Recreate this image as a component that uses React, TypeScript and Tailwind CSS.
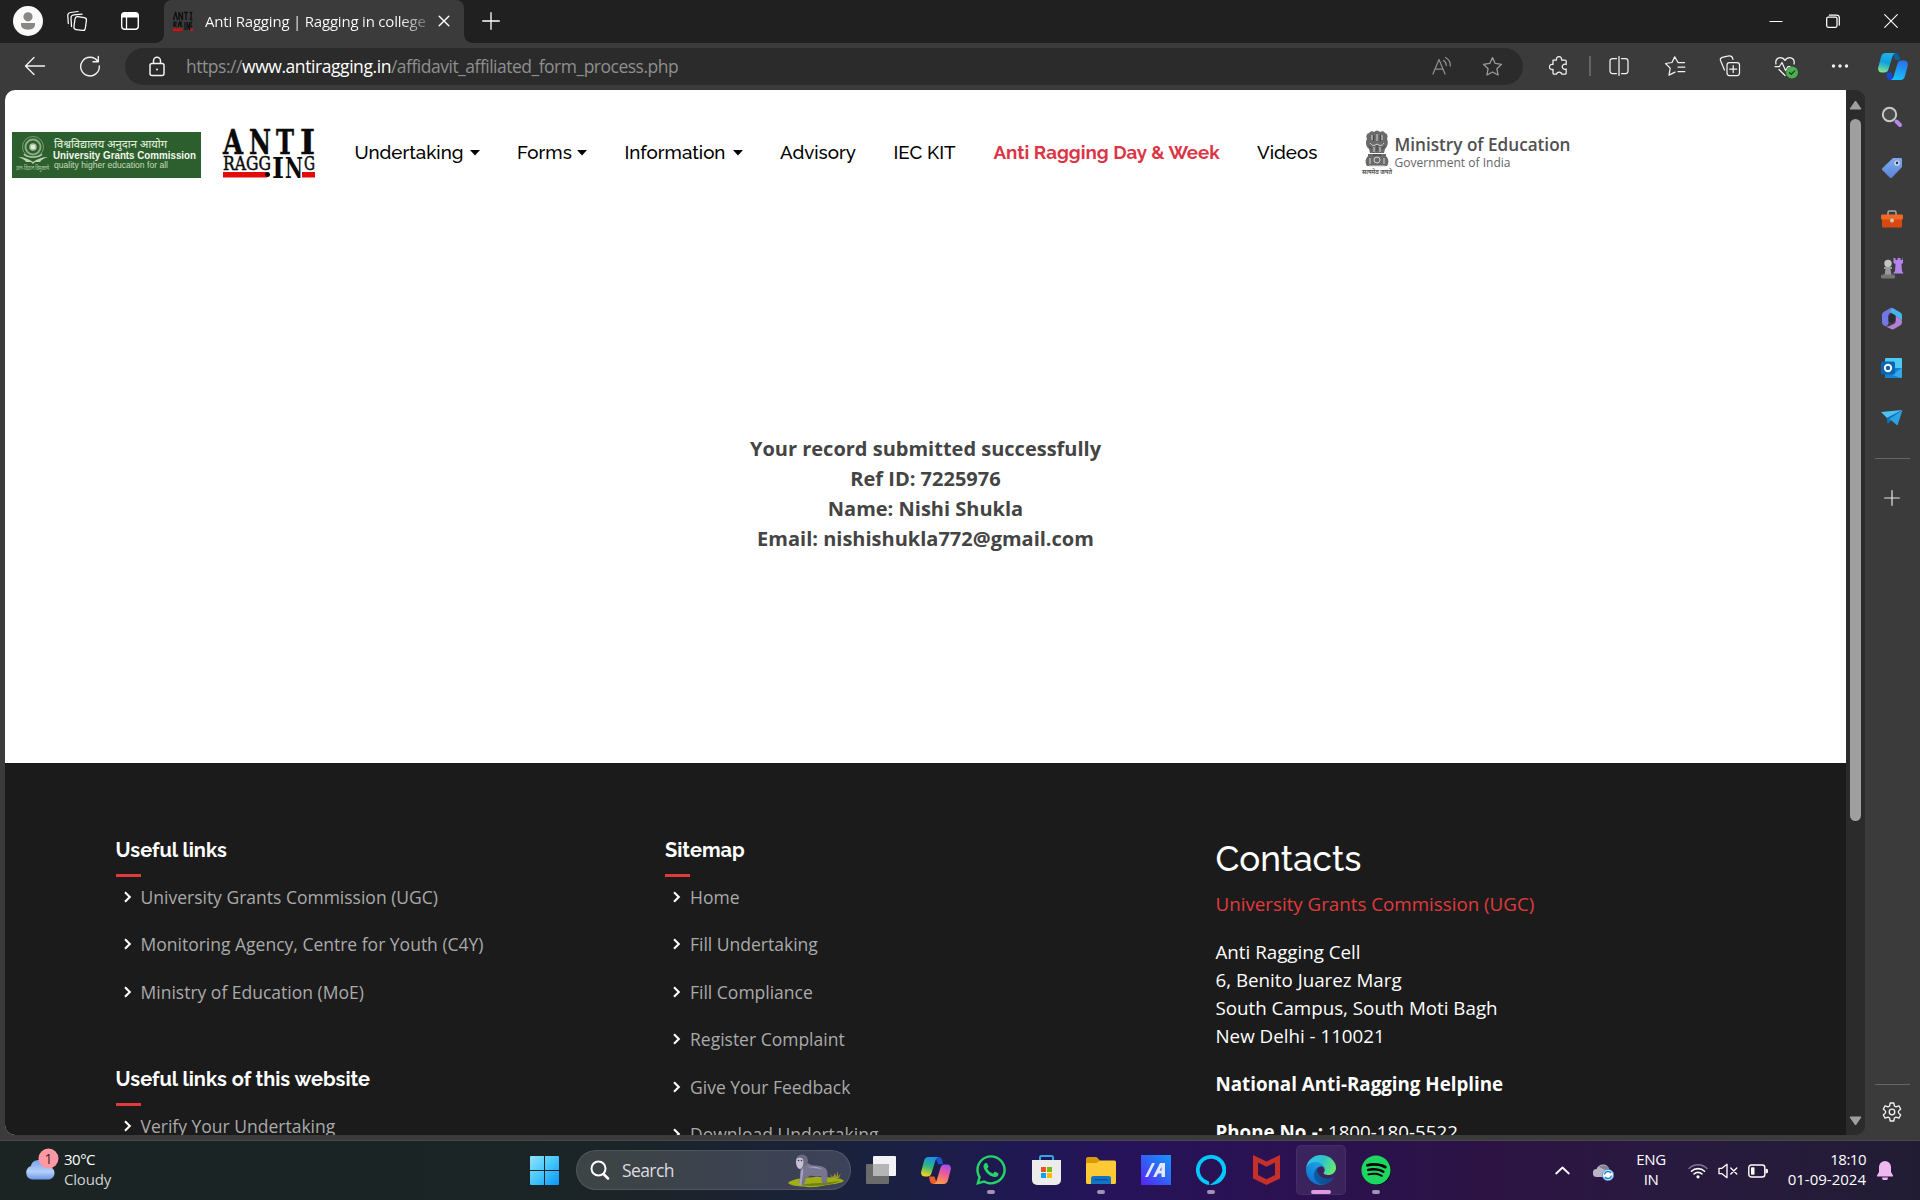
import type { ReactNode } from 'react';
import { FaSpotify, FaWhatsapp } from 'react-icons/fa6';

type BoxProps = { className: string; viewBox: string; children: ReactNode };

function Glyph({ className, viewBox, children }: BoxProps) {
  return (
    <svg
      className={'shrink-0 ' + className}
      viewBox={viewBox}
      fill="none"
      stroke="currentColor"
      strokeWidth="1.25"
      strokeLinecap="round"
      strokeLinejoin="round"
    >
      {children}
    </svg>
  );
}

/* ---------- Browser tab strip ---------- */

function Favicon() {
  return (
    <svg className="ml-[9px] size-[20px] shrink-0" viewBox="0 0 20 20">
      <path d="M.5 9 2.500 1 4.500 9M6 9V1l3.500 8V1M11 1.500h4M13 1v8M18 1v8M16.700 1.500h2.600M16.700 8.500h2.600" fill="none" stroke="#101010" strokeWidth="1.300" />
      <path d="M1 16v-5h2v2H1l2.500 3M5 16l1.500-5L8 16M9 11h-1v4h1.500M12 11v8M14 19v-8l2.500 8v-8M19.500 11h-1.500v5h1.500" fill="none" stroke="#101010" strokeWidth="1.100" />
      <path d="M0 17.500h9.500V20H0zM17.500 17.500H20V20h-2.500z" fill="#e30a0a" />
    </svg>
  );
}

function TabStrip() {
  return (
    <div className="flex h-[43px] shrink-0 items-center bg-[#202020] text-white">
      <svg className="mb-[1px] ml-[13px] size-[30px] shrink-0" viewBox="0 0 30 30">
        <circle cx="15" cy="15" r="15" fill="#fafafa" />
        <circle cx="15" cy="10.8" r="4.6" fill="#8a8683" />
        <path d="M8 17h14v1.500c0 3.400-3 5.200-7 5.200s-7-1.800-7-5.200z" fill="#8a8683" />
      </svg>
      <Glyph className="mb-[1px] ml-[23px] size-[22px]" viewBox="0 0 22 22">
        <rect x="8.500" y="7" width="11.500" height="13" rx="2.500" transform="rotate(8 14 13)" />
        <path d="M5.500 16.500 5 8.200C4.900 6.200 6 5 8 4.800l8-.6" />
        <path d="M2.300 13.500 1.800 6c-.2-2 .9-3.200 2.900-3.500L12 1.500" />
      </Glyph>
      <svg className="mb-[1px] ml-[32px] size-[20px] shrink-0" viewBox="0 0 20 20">
        <rect x="1.700" y="1.700" width="16.600" height="16.600" rx="3" fill="none" stroke="#fff" strokeWidth="1.400" />
        <path d="M1.500 6.500V4.500a3 3 0 0 1 3-3h11a3 3 0 0 1 3 3v2z" fill="#fff" />
        <path d="M6.500 6v12" stroke="#fff" strokeWidth="1.300" />
      </svg>
      <div className="ml-[16px] flex h-full items-end">
        <div className="size-[8px] bg-[radial-gradient(circle_at_0_0,#202020_7.500px,#3b3b3b_8px)]" />
      </div>
      <div className="flex h-full w-[300px] items-center rounded-t-[8px] bg-[#3b3b3b] pb-[1px]">
        <Favicon />
        <span className="ml-[12px] w-[222px] overflow-hidden bg-[linear-gradient(90deg,#fff_88%,#6a6a6a_100%)] bg-clip-text text-[15px] tracking-[-0.2px] whitespace-nowrap text-transparent">
          Anti Ragging | Ragging in college
        </span>
        <Glyph className="ml-[11px] size-[12px]" viewBox="0 0 12 12">
          <path d="m1.200 1.200 9.600 9.600M10.800 1.200 1.200 10.800" strokeWidth="1.400" />
        </Glyph>
      </div>
      <div className="flex h-full items-end">
        <div className="size-[8px] bg-[radial-gradient(circle_at_100%_0,#202020_7.500px,#3b3b3b_8px)]" />
      </div>
      <Glyph className="mb-[1px] ml-[10px] size-[18px]" viewBox="0 0 18 18">
        <path d="M9 .7v16.600M.7 9h16.600" strokeWidth="1.300" />
      </Glyph>
      <div className="mb-[1px] ml-auto flex items-center">
        <Glyph className="size-[14px]" viewBox="0 0 14 14">
          <path d="M.5 7.500h13" strokeLinecap="butt" strokeWidth="1" />
        </Glyph>
        <Glyph className="ml-[43px] size-[14px]" viewBox="0 0 14 14">
          <rect x=".7" y="3" width="10.300" height="10.300" rx="1.500" />
          <path d="M3.300 1h7.200a2.800 2.800 0 0 1 2.800 2.800V11" />
        </Glyph>
        <Glyph className="mr-[22px] ml-[44px] size-[14px]" viewBox="0 0 14 14">
          <path d="m.7.7 12.600 12.600M13.300.7.7 13.300" strokeWidth="1.100" />
        </Glyph>
      </div>
    </div>
  );
}

/* ---------- Address bar ---------- */

function CopilotLogo({ blue, className }: { blue?: boolean; className: string }) {
  const id = blue ? 'cb' : 'cc';
  const left = blue ? ['#1fb4e8', '#0fa0e0', '#7ee58f'] : ['#1a8cf0', '#2fb77c', '#f7d21c'];
  const right = blue ? ['#2c6fe8', '#1e9bf2', '#19c3f7'] : ['#a34bf0', '#f0608f', '#fb9a4a'];
  return (
    <svg className={'shrink-0 ' + className} viewBox="0 0 30 27">
      <defs>
        <linearGradient id={id + 'l'} x1=".6" y1="0" x2=".35" y2="1">
          <stop offset="0" stopColor={left[0]} />
          <stop offset=".5" stopColor={left[1]} />
          <stop offset="1" stopColor={left[2]} />
        </linearGradient>
        <linearGradient id={id + 'r'} x1=".7" y1="0" x2=".4" y2="1">
          <stop offset="0" stopColor={right[0]} />
          <stop offset=".5" stopColor={right[1]} />
          <stop offset="1" stopColor={right[2]} />
        </linearGradient>
      </defs>
      <path d="M14 0h3.500c2 0 3 1 3.600 3l1.200 4.200h-5z" fill={blue ? '#0a5f9c' : '#1b52c9'} />
      <path d="M8 19.500h5.500L16 27h-3.500c-2 0-3-1-3.600-3z" fill={blue ? '#1846d6' : '#ee5a2a'} />
      <path d="M7.500 0h10c-1.800.3-2.600 1.800-3.200 3.800l-3.800 12.400c-.7 2.400-2 3.300-4.200 3.300H4c-3.200 0-4.500-2.300-3.700-5.300L3 4C3.700 1.300 5 0 7.500 0z" fill={`url(#${id}l)`} />
      <path d="M22.500 27h-10c1.800-.3 2.600-1.800 3.200-3.800l3.800-12.400c.7-2.400 2-3.300 4.200-3.300H26c3.200 0 4.500 2.300 3.700 5.300L27 23c-.7 2.700-2 4-4.500 4z" fill={`url(#${id}r)`} />
    </svg>
  );
}

const STAR = 'm10 1.500 2.600 5.600 6 .8-4.400 4.200 1.100 6-5.300-2.900-5.300 2.900 1.100-6L1.400 7.900l6-.8z';

function Toolbar() {
  return (
    <div className="flex h-[46px] shrink-0 items-center bg-[#3b3b3b] text-[#f2f2f2]">
      <Glyph className="ml-[24px] size-[22px]" viewBox="0 0 22 22">
        <path d="M20.500 11H1.700M10 2.500 1.500 11l8.500 8.500" strokeWidth="1.400" />
      </Glyph>
      <Glyph className="ml-[33px] size-[22px]" viewBox="0 0 22 22">
        <path d="M18.800 6.500A9.300 9.300 0 1 0 20.300 11M19.300 1.500v5.300H14" strokeWidth="1.400" />
      </Glyph>
      <div className="ml-[24px] flex h-[37px] w-[1398px] items-center rounded-full bg-[#2b2b2b]">
        <svg className="ml-[24px] h-[21px] w-[16px] shrink-0" viewBox="0 0 16 21" fill="none" stroke="#f2f2f2" strokeWidth="1.500">
          <rect x="1" y="7.500" width="14" height="12" rx="2" />
          <path d="M4.500 7.500V4.700a3.500 3.500 0 0 1 7 0v2.800" />
          <circle cx="8" cy="13.500" r="1" fill="#f2f2f2" stroke="none" />
        </svg>
        <span className="ml-[21px] text-[17.5px] tracking-[-0.46px] whitespace-nowrap text-[#8f8f8f]">
          https://<span className="tracking-[-0.43px] text-white">www.antiragging.in</span>
          <span className="tracking-[-0.5px]">/affidavit_affiliated_form_process.php</span>
        </span>
        <Glyph className="ml-auto size-[20px] text-[#8f8f8f]" viewBox="0 0 20 20">
          <path d="m1 18 6-14.500L13 18M3 13h8M11.500 4.500a6 6 0 0 1 2.800 5M13.500 1.500a9 9 0 0 1 4.800 8.500" />
        </Glyph>
        <Glyph className="mr-[20px] ml-[30px] size-[21px] text-[#9a9a9a]" viewBox="0 0 20 20">
          <path d={STAR} />
        </Glyph>
      </div>
      <Glyph className="ml-[26px] size-[20px]" viewBox="0 0 20 20">
        <path d="M4 4h3.500a2.600 2.600 0 1 1 5 0H16a1.200 1.200 0 0 1 1.200 1.200v3.300a2.600 2.600 0 1 0 0 4.500v4A1.200 1.200 0 0 1 16 18.200h-3.200a2.700 2.700 0 0 0-5.300 0H5.200A1.200 1.200 0 0 1 4 17v-3.700a2.600 2.600 0 1 1 0-4.800z" />
      </Glyph>
      <div className="ml-[20px] h-[20px] w-[2px] bg-[#636363]" />
      <Glyph className="ml-[18px] h-[20px] w-[20px]" viewBox="0 0 20 20">
        <path d="M7.500 2.500h-4A2.500 2.500 0 0 0 1 5v10a2.500 2.500 0 0 0 2.500 2.500h4M12.500 2.500h4A2.500 2.500 0 0 1 19 5v10a2.500 2.500 0 0 1-2.500 2.500h-4M10 .6v18.800" />
      </Glyph>
      <Glyph className="ml-[35px] size-[22px]" viewBox="0 0 22 22">
        <path d="M20.500 7.500H14L10.700 1.800 8 7.500 1.500 8.500l4.700 4.600-1.200 7 6-3M14 12h6.800M14 16.500h6.800" />
      </Glyph>
      <Glyph className="ml-[33px] size-[22px]" viewBox="0 0 22 22">
        <rect x="8" y="7.500" width="12.500" height="13" rx="2.500" />
        <path d="M14.200 10.500v7M10.700 14h7M5.500 15 1.600 5.800C1 4 1.500 3 3.300 2.400L8.500 1.200C12 .3 13.500 1.500 14 4.500" />
      </Glyph>
      <Glyph className="mt-[2px] ml-[33px] size-[24px]" viewBox="0 0 24 24">
        <path d="M2 9C1 5 3.500 2.500 6.300 2.500c2 0 3.600 1 4.700 3 1.100-2 2.700-3 4.700-3C18.500 2.500 21 5 20 9M1 11.500h4.500L8 7.500l3.500 8 2.500-4h2M5 14.500l6 6" />
        <circle cx="18" cy="17.500" r="6" fill="#4cb050" stroke="none" />
        <path d="m15.500 17.700 1.800 1.700 3.300-3.500" stroke="#1d3b1e" />
      </Glyph>
      <svg className="ml-[33px] h-[6px] w-[18px] shrink-0" viewBox="0 0 18 6" fill="#f2f2f2">
        <circle cx="2.500" cy="3" r="1.700" />
        <circle cx="9" cy="3" r="1.700" />
        <circle cx="15.500" cy="3" r="1.700" />
      </svg>
      <CopilotLogo blue className="mr-[12px] ml-auto h-[27px] w-[30px]" />
    </div>
  );
}

/* ---------- Site logos ---------- */

function AntiRaggingLogo() {
  return (
    <svg className="ml-[22px] h-[50px] w-[92px] shrink-0 overflow-visible" viewBox="0 0 92 50">
      <path d="M0 44h44v5.500H0zM79 44h13v5.500H79z" fill="#e30a0a" />
      <g fontFamily="'DejaVu Serif','Liberation Serif',serif" fontWeight="700" fill="#0a0a0a">
        <text x="0" y="25.500" fontSize="34" textLength="20" lengthAdjust="spacingAndGlyphs" stroke="#0a0a0a" strokeWidth=".5">A</text>
        <text x="26" y="25.500" fontSize="34" textLength="22" lengthAdjust="spacingAndGlyphs" stroke="#0a0a0a" strokeWidth=".5">N</text>
        <text x="53" y="25.500" fontSize="34" textLength="18" lengthAdjust="spacingAndGlyphs" stroke="#0a0a0a" strokeWidth=".5">T</text>
        <text x="77" y="25.500" fontSize="34" textLength="15" lengthAdjust="spacingAndGlyphs" stroke="#0a0a0a" strokeWidth=".5">I</text>
        <text x="0" y="41.500" fontSize="18.500" fontWeight="400" textLength="48" lengthAdjust="spacingAndGlyphs" stroke="#0a0a0a" strokeWidth=".5">RAGG</text>
        <text x="49" y="49.500" fontSize="28.500" textLength="12" lengthAdjust="spacingAndGlyphs">I</text>
        <text x="62" y="49.500" fontSize="28.500" textLength="18" lengthAdjust="spacingAndGlyphs">N</text>
        <text x="81" y="41.500" fontSize="18.500" fontWeight="400" textLength="11" lengthAdjust="spacingAndGlyphs" stroke="#0a0a0a" strokeWidth=".5">G</text>
      </g>
      <circle cx="44.500" cy="46.500" r="2.500" fill="#0a0a0a" />
    </svg>
  );
}

function UgcLogo() {
  return (
    <svg className="h-[46px] w-[189px] shrink-0" viewBox="0 0 189 46">
      <rect width="189" height="46" fill="#2c5f2d" />
      <g fill="none" stroke="#a9c4a0">
        <circle cx="21" cy="15" r="10.500" strokeWidth="1" opacity=".6" />
        <circle cx="21" cy="15" r="7.500" strokeWidth="2" opacity=".75" />
        <circle cx="21" cy="15" r="3" fill="#e3efdc" strokeWidth="1.500" />
        <path d="M12 22c3 4 15 4 18 0" strokeWidth="1.500" />
      </g>
      <path d="M6 25c6 0 11 2 15 5 4-3 9-5 15-5-4 1-7 3-8 5h-5l-2 2-2-2h-5c-1-2-4-4-8-5z" fill="#bcd3b4" />
      <text x="4" y="38" fontSize="6" fill="#a9c4a0" fontFamily="'Noto Sans Devanagari','Noto Sans',sans-serif" textLength="33" lengthAdjust="spacingAndGlyphs">ज्ञान-विज्ञान विमुक्तये</text>
      <text x="42" y="15.500" fontSize="11" fill="#dbe8d4" fontFamily="'Noto Sans Devanagari','Noto Sans',sans-serif" textLength="113" lengthAdjust="spacingAndGlyphs">विश्वविद्यालय अनुदान आयोग</text>
      <text x="41" y="27" fontSize="10.500" fontWeight="700" fill="#f2f7ee" fontFamily="'Liberation Sans',sans-serif" textLength="143" lengthAdjust="spacingAndGlyphs">University Grants Commission</text>
      <text x="42" y="36" fontSize="8.500" fill="#c8dcc0" fontFamily="'Liberation Sans',sans-serif" textLength="114" lengthAdjust="spacing">quality higher education for all</text>
    </svg>
  );
}

function MinistryLogo() {
  return (
    <svg className="h-[46px] w-[212px] shrink-0" viewBox="0 0 212 46">
      <g fill="#6a6a6a">
        <path d="M8 3c2-2 4-2 5-1 2-2 4-2 6 0 2-1 4-1 5 1 3 1 3 4 2 6 2 4 0 8-2 10l-1 4H9l-1-4C5 17 4 12 6 9 5 7 5 4 8 3z" />
        <path d="M7 24h18v2c3 3 3 7 1 10H6c-2-3-2-7 1-10z" />
      </g>
      <g fill="none" stroke="#d6d6d6" strokeWidth="1">
        <path d="M11 5v5M16 4v7M21 5v5M9 13c2 3 4 3 7 1 3 2 5 2 7-1M13 17v5M19 17v5" />
        <circle cx="16" cy="30" r="3" />
        <path d="M9 28v6M23 28v6M8 36h16" />
      </g>
      <g fill="none" stroke="#444" strokeWidth="1">
        <path d="M12.500 5v6M19.500 5v6M8 16l3 3M24 16l-3 3M16 15v6M12 25h8" />
      </g>
      <text x="1" y="43.500" fontSize="6.500" fontWeight="700" fill="#555" fontFamily="'Noto Sans Devanagari','Noto Sans',sans-serif" textLength="30" lengthAdjust="spacingAndGlyphs">सत्यमेव जयते</text>
      <text x="33.500" y="21" fontSize="18" fontWeight="600" fill="#505050" fontFamily="'Open Sans',sans-serif" textLength="176" lengthAdjust="spacingAndGlyphs">Ministry of Education</text>
      <text x="33.500" y="36.500" fontSize="13.500" fill="#666" fontFamily="'Open Sans',sans-serif" textLength="116" lengthAdjust="spacingAndGlyphs">Government of India</text>
    </svg>
  );
}

/* ---------- Web page ---------- */

function Caret() {
  return (
    <svg className="mt-[1px] h-[6px] w-[10px] shrink-0" viewBox="0 0 10 6">
      <path d="M0 0h10L5 5.600z" fill="#000" />
    </svg>
  );
}

function SiteHeader() {
  return (
    <header className="flex h-[125px] items-center pl-[7px] font-['Raleway','Lato',sans-serif] text-[18.75px] font-medium text-black">
      <div className="mt-[5px]">
        <UgcLogo />
      </div>
      <AntiRaggingLogo />
      <nav className="ml-[39.5px] flex items-center gap-[37.5px] whitespace-nowrap">
        <a className="flex w-[125px] items-center justify-between">Undertaking<Caret /></a>
        <a className="flex w-[70px] items-center justify-between">Forms<Caret /></a>
        <a className="flex w-[118px] items-center justify-between">Information<Caret /></a>
        <a className="w-[76px]">Advisory</a>
        <a className="w-[62.5px]">IEC KIT</a>
        <a className="w-[226px] font-bold text-[#dc3545]">Anti Ragging Day &amp; Week</a>
        <a className="w-[61px]">Videos</a>
      </nav>
      <div className="ml-[42.5px]">
        <MinistryLogo />
      </div>
    </header>
  );
}

function FooterList({ title, items }: { title: string; items: string[] }) {
  return (
    <section>
      <h4 className="h-[36px] font-['Raleway','Lato',sans-serif] text-[20px] leading-[24px] font-bold text-white">{title}</h4>
      <div className="-mb-[4px] h-[3px] w-[25px] bg-[#e03a3c]" />
      <ul>
        {items.map((item) => (
          <li key={item} className="flex h-[47.5px] items-center text-[17.5px] text-[#aaaaaa]">
            <svg className="mr-[9px] ml-[8px] h-[12px] w-[8px]" viewBox="0 0 8 12" fill="none" stroke="#fff" strokeWidth="2.100">
              <path d="m1 1.200 4.800 4.800L1 10.800" />
            </svg>
            {item}
          </li>
        ))}
      </ul>
    </section>
  );
}

function SiteFooter() {
  return (
    <footer className="grid grid-cols-[549.500px_550.500px_1fr] bg-[#1b1b1b] pt-[75px] pl-[110.5px]">
      <div className="flex flex-col gap-[51.5px]">
        <FooterList
          title="Useful links"
          items={['University Grants Commission (UGC)', 'Monitoring Agency, Centre for Youth (C4Y)', 'Ministry of Education (MoE)']}
        />
        <FooterList title="Useful links of this website" items={['Verify Your Undertaking']} />
      </div>
      <FooterList
        title="Sitemap"
        items={['Home', 'Fill Undertaking', 'Fill Compliance', 'Register Complaint', 'Give Your Feedback', 'Download Undertaking']}
      />
      <div className="text-[18.75px] leading-[28px] text-white">
        <h2 className="font-['Raleway','Lato',sans-serif] text-[35px] leading-[42px] font-medium">Contacts</h2>
        <p className="mt-[10px] text-[#e03a3c]">University Grants Commission (UGC)</p>
        <p className="mt-[20px]">
          Anti Ragging Cell
          <br />
          6, Benito Juarez Marg
          <br />
          South Campus, South Moti Bagh
          <br />
          New Delhi - 110021
        </p>
        <p className="mt-[20px] font-bold">National Anti-Ragging Helpline</p>
        <p className="mt-[20px]">
          <b>Phone No.-:</b> 1800-180-5522
        </p>
      </div>
    </footer>
  );
}

function ScrollBar() {
  return (
    <div className="flex w-[19px] shrink-0 flex-col items-center bg-[#2b2b2b]">
      <svg className="mt-[10px] h-[10px] w-[13px] shrink-0" viewBox="0 0 13 10">
        <path d="M6.500 1 12 9H1z" fill="#9f9f9f" stroke="#9f9f9f" strokeLinejoin="round" />
      </svg>
      <div className="mt-[9px] h-[702px] w-[11px] shrink-0 rounded-full bg-[#9f9f9f]" />
      <svg className="mt-auto mb-[9px] h-[10px] w-[13px] shrink-0" viewBox="0 0 13 10">
        <path d="M6.500 9 12 1H1z" fill="#9f9f9f" stroke="#9f9f9f" strokeLinejoin="round" />
      </svg>
    </div>
  );
}

/* ---------- Edge sidebar ---------- */

function SideBar() {
  return (
    <aside className="flex w-[54px] shrink-0 flex-col items-center pt-[17px] pb-[12px] text-[#e8e8e8]">
      <svg className="size-[22px] shrink-0" viewBox="0 0 22 22" fill="none">
        <circle cx="8.500" cy="8.500" r="6.700" stroke="#c9c9c9" strokeWidth="2" fill="#4a4a4a" />
        <path d="m15.500 15.500 3.500 3.500" stroke="#b986ee" strokeWidth="4" strokeLinecap="round" />
      </svg>
      <svg className="mt-[29px] size-[22px] shrink-0" viewBox="0 0 22 22">
        <defs>
          <linearGradient id="tag" x1="0" y1="0" x2="0" y2="1">
            <stop offset="0" stopColor="#7fa8ee" />
            <stop offset="1" stopColor="#5a86d8" />
          </linearGradient>
        </defs>
        <path d="M12 1h7.500C20.500 1 21 1.500 21 2.500V10L11 20.500c-.8.800-1.500.8-2.300 0L1.500 13.300c-.7-.8-.7-1.500 0-2.300z" fill="url(#tag)" />
        <circle cx="16" cy="6" r="2" fill="#20304c" stroke="#e5ecf8" strokeWidth="1.200" />
      </svg>
      <svg className="mt-[29px] h-[22px] w-[22px] shrink-0" viewBox="0 0 22 22">
        <path d="M7 7V4.500C7 3.500 7.500 3 8.500 3h5c1 0 1.500.5 1.500 1.500V7" fill="none" stroke="#a9a9a9" strokeWidth="1.500" />
        <rect x="1" y="10" width="20" height="9.500" rx="1" fill="#d9480f" />
        <rect x="0" y="6.500" width="22" height="5" rx="1" fill="#f06a26" />
        <circle cx="11" cy="12.500" r="2" fill="#c9c9c9" />
      </svg>
      <svg className="mt-[27px] size-[23px] shrink-0" viewBox="0 0 23 23">
        <path d="M12.500 1h2v2h2V1h3v2h2V1H22v5l-1.500 1 .5 7 1.500 2.500H12L14 14l.5-7L12.500 6z" fill="#b583ec" />
        <circle cx="7" cy="6.500" r="3.700" fill="#c4c4c4" />
        <path d="M3 10h8v2H9.500l1 6h-7l1-6H3z" fill="#9a9a9a" />
        <rect x="0" y="17.500" width="14" height="4" rx="1.500" fill="#757575" />
      </svg>
      <svg className="mt-[27px] h-[23px] w-[22px] shrink-0" viewBox="0 0 22 23">
        <path d="M9.500 1 3 4.700C1.500 5.600 1 6.500 1 8v7c0 1.600.6 2.600 2 3.400l1.500.9C6.500 19 7.500 17.500 7.500 15.500V8.800c0-1.500.5-2.200 1.700-2.900L14.500 3 12 1.300c-.9-.5-1.700-.7-2.500-.3z" fill="#7378e0" />
        <path d="m11.500 1 7.500 4.200c1.400.8 2 1.700 2 3.300V14c-.3-1.200-1.200-1.900-2.500-2.600l-4-2.300V8.500L9.800 5.600 9 4.500z" fill="#45b4ea" />
        <path d="M4.300 19.200 10 22.100c1 .5 2 .5 3 0l6-3.600c1.500-.9 2-1.900 2-3.800 0-1.400-.8-2.500-2-3.200L14.500 9v5.500c0 1-.3 1.700-1.300 2.200l-3.700 1.900c-1.800 1-3.500 1.200-5.200.6z" fill="#b07fd6" />
        <path d="m7.500 8.800 3.500-2 3.500 2v5L11 16l-3.500-2z" fill="#2c2c36" />
      </svg>
      <svg className="mt-[27px] size-[22px] shrink-0" viewBox="0 0 22 22">
        <rect x="4" y="1" width="17" height="11" rx="1" fill="#4cc9f5" />
        <path d="M4 11h17v9c0 .6-.4 1-1 1H5c-.6 0-1-.4-1-1z" fill="#1583d3" />
        <path d="m21 11-10 7 9 3c.6 0 1-.4 1-1z" fill="#32a9e8" />
        <rect x="0" y="4.500" width="14" height="13" rx="1.500" fill="#0a63b5" />
        <circle cx="7" cy="11" r="3.200" fill="none" stroke="#fff" strokeWidth="1.900" />
      </svg>
      <svg className="mt-[30px] h-[18px] w-[22px] shrink-0" viewBox="0 0 22 18">
        <path d="M0 3 21.500 1 6 9z" fill="#4cc2f1" />
        <path d="M6 9 21.500 1 6.500 15z" fill="#1173bd" />
        <path d="M8.500 10 21.500 1l-5 15.500z" fill="#2aa3e6" />
      </svg>
      <div className="mt-[31px] h-px w-[35px] shrink-0 bg-[#666]" />
      <Glyph className="mt-[31px] size-[16px]" viewBox="0 0 16 16">
        <path d="M8 .7v14.600M.7 8h14.600" strokeWidth="1.200" />
      </Glyph>
      <div className="mt-auto h-px w-[35px] shrink-0 bg-[#666]" />
      <svg className="mt-[16px] size-[22px] shrink-0" viewBox="0 0 22 22" fill="none" stroke="#f2f2f2" strokeWidth="1.300" strokeLinejoin="round">
        <path d="M9.200 1h3.600l.6 3 1.600.9 2.900-1 1.800 3.100-2.200 2.100v1.800l2.200 2.100-1.800 3.100-2.900-1-1.600.9-.6 3H9.200l-.6-3-1.600-.9-2.900 1L2.300 13l2.200-2.100V9.100L2.300 7l1.800-3.100 2.900 1L8.600 4z" transform="translate(0 1)" />
        <circle cx="11" cy="11" r="2.800" />
      </svg>
    </aside>
  );
}

/* ---------- Windows taskbar ---------- */

function EdgeLogo() {
  return (
    <svg className="size-[30px]" viewBox="0 0 256 256">
      <defs>
        <linearGradient id="ea" x1=".2" y1=".6" x2="1" y2=".7">
          <stop offset="0" stopColor="#0c59a4" />
          <stop offset="1" stopColor="#114a8b" />
        </linearGradient>
        <linearGradient id="eb" x1=".7" y1=".2" x2=".3" y2="1">
          <stop offset="0" stopColor="#1b9de2" />
          <stop offset="1" stopColor="#0a6fd0" />
        </linearGradient>
        <linearGradient id="ec" x1="0" y1=".3" x2="1" y2=".6">
          <stop offset="0" stopColor="#35c1f1" />
          <stop offset=".5" stopColor="#2fc2c9" />
          <stop offset="1" stopColor="#66eb6e" />
        </linearGradient>
      </defs>
      <path fill="url(#ea)" d="M231 190.500c-3.400 1.800-6.900 3.400-10.500 4.700a101.700 101.700 0 0 1-35.900 6.400c-47.300 0-88.500-32.500-88.500-74.300 0-11.400 6.400-21.900 16.400-27.300-42.800 1.800-53.800 46.400-53.800 72.500 0 74 68.100 81.400 82.800 81.400 7.900 0 19.800-2.300 27-4.600l1.300-.4a128.300 128.300 0 0 0 66.600-52.800 4 4 0 0 0-5.400-5.600z" />
      <path fill="url(#eb)" d="M105.700 241.400a79.200 79.200 0 0 1-22.700-21.400 80.700 80.700 0 0 1 29.500-120c3.200-1.500 8.500-4.100 15.600-4a32.400 32.400 0 0 1 25.700 13 31.900 31.900 0 0 1 6.300 18.700c0-.2 24.500-79.600-80-79.600-43.900 0-80 41.700-80 78.200a130 130 0 0 0 12.100 56 128 128 0 0 0 156.400 67 75.500 75.500 0 0 1-62.800-8z" />
      <path fill="url(#ec)" d="M152.300 148.900c-.9 1-3.400 2.500-3.400 5.600 0 2.600 1.700 5.200 4.800 7.300 14.300 10 41.400 8.600 41.500 8.600a59.600 59.600 0 0 0 30.300-8.300 61.400 61.400 0 0 0 30.400-52.900c.3-22.400-8-37.300-11.300-43.900C223.500 23.900 177.700 0 128 0A128 128 0 0 0 0 126.200c.5-36.500 36.800-66 80-66 3.500 0 23.500.3 42 10a72.600 72.600 0 0 1 30.900 29.300c6.100 10.600 7.200 24.100 7.200 29.500 0 5.400-2.700 13.300-7.800 19.900z" />
    </svg>
  );
}

function Gorilla() {
  return (
    <svg className="h-[34px] w-[58px] shrink-0" viewBox="0 0 58 34">
      <path d="M1 29c3-4 18-6 32-6 12 0 22 1 24 4-4 3-12 3-22 5-8 1.500-14 1.500-18 .5-6 0-14-1-16-3.500z" fill="#9fae18" />
      <path d="M14 31c8-2 30-2 40-4.500-5 4-30 7-40 4.500z" fill="#6c8210" />
      <path d="M45 24l-2-4 3 3 2-4 1 4 2-6v6l3-4-2 5z" fill="#9a9a2a" />
      <path d="M15 10c3-3 6-1 9 1l9 1c5 .5 8 4 7.500 9L40 29h-5l-1-7c-3 1-6 1-10-.5L19 24l-2 7h-5l1-8c0-4 0-9 2-13z" fill="#77758f" />
      <path d="M20 13c5-1 12-1 16 3-5-2-11-2-16-3z" fill="#a19fb8" />
      <path d="M16 14c1 5-1 10-1.500 17H12l1.500-8c0-4 .5-7 2.500-9z" fill="#a5a3bb" />
      <circle cx="15" cy="6.500" r="6" fill="#6b6a80" />
      <path d="M9.500 5c2-2 5-1 6.500 0 1 4 0 9-3 10-3 0-5-6-3.500-10z" fill="#c4c2d2" />
      <circle cx="11.500" cy="6.500" r=".8" fill="#333" />
      <circle cx="14.500" cy="6.500" r=".8" fill="#333" />
    </svg>
  );
}

function AppSlot({ children, mark, active }: { children: ReactNode; mark?: boolean; active?: boolean }) {
  return (
    <div className={'relative flex h-[50px] w-[50px] items-center justify-center rounded-[5px] ' + (active ? 'bg-white/8 ring-1 ring-white/5 ring-inset' : '')}>
      {children}
      {mark && <span className="absolute bottom-[1px] h-[4px] w-[8px] rounded-full bg-[#a093b5]" />}
      {active && <span className="absolute bottom-[1px] h-[4px] w-[20px] rounded-full bg-[#dc9be4]" />}
    </div>
  );
}

function TaskBar() {
  return (
    <div className="flex h-[60px] shrink-0 items-center border-t border-[#4a4650] bg-[linear-gradient(90deg,#1b2423_0%,#1b2426_32%,#1a2140_46%,#1e1950_52%,#26135a_58%,#2b1150_68%,#2c1343_78%,#281a3e_88%,#211c34_100%)] text-[15px] text-white">
      <svg className="-mt-[12px] ml-[24px] h-[34px] w-[36px] shrink-0" viewBox="0 0 36 34">
        <defs>
          <linearGradient id="cloud" x1="0" y1="0" x2="0" y2="1">
            <stop offset="0" stopColor="#7aa2ea" />
            <stop offset=".6" stopColor="#b4d0fb" />
            <stop offset="1" stopColor="#6c97e6" />
          </linearGradient>
        </defs>
        <path d="M8 31.500a7 7 0 0 1-1-13.500C7.500 14 11 12 15 12c5 0 8 3 9 6.500 4 0 6.500 3 6.500 6.500 0 4-3 6.500-6.500 6.500z" fill="url(#cloud)" />
        <circle cx="24.500" cy="10.500" r="10" fill="#ff98a4" />
        <text x="24.500" y="15.500" fontSize="14" textAnchor="middle" fill="#3a2226" fontFamily="'Open Sans',sans-serif">1</text>
      </svg>
      <div className="-mt-[3px] ml-[4px] w-[466px] leading-[20px]">
        <div className="tracking-[-0.5px]">30°C</div>
        <div className="tracking-[-0.2px] text-[#d0d0d0]">Cloudy</div>
      </div>
      <svg className="size-[29px] shrink-0" viewBox="0 0 29 29">
        <defs>
          <linearGradient id="win" x1="0" y1="0" x2="1" y2="1">
            <stop offset="0" stopColor="#8fe3fb" />
            <stop offset=".5" stopColor="#45c6fb" />
            <stop offset="1" stopColor="#0a95f5" />
          </linearGradient>
        </defs>
        <path d="M1 0h13v14H0V1a1 1 0 0 1 1-1zM15 0h13a1 1 0 0 1 1 1v13H15zM0 15h14v14H1a1 1 0 0 1-1-1zM15 15h14v13a1 1 0 0 1-1 1H15z" fill="url(#win)" />
      </svg>
      <div className="mb-[1px] ml-[17px] flex h-[40px] w-[275px] items-center rounded-full bg-white/15 text-[17.5px] ring-1 ring-white/10 ring-inset">
        <Glyph className="ml-[14px] size-[20px]" viewBox="0 0 20 20">
          <circle cx="8.500" cy="8.500" r="7" strokeWidth="2" />
          <path d="m13.500 14 4.500 4.500" strokeWidth="2.500" />
        </Glyph>
        <span className="ml-[12px] tracking-[-0.6px] text-[#dcdce0]">Search</span>
        <div className="mt-[2px] mr-[6px] ml-auto">
          <Gorilla />
        </div>
      </div>
      <div className="mb-[1px] ml-[5px] flex items-center gap-[5px]">
        <AppSlot>
          <svg className="h-[28px] w-[30px]" viewBox="0 0 30 28">
            <rect x="7" y="0" width="23" height="20" rx="1" fill="#f3f3f5" />
            <rect x="0" y="8" width="23" height="20" rx="1" fill="#6b6b6b" />
            <path d="M7 8h16v12H7z" fill="#b5b5b5" />
          </svg>
        </AppSlot>
        <AppSlot>
          <CopilotLogo className="h-[27px] w-[30px]" />
        </AppSlot>
        <AppSlot mark>
          <FaWhatsapp className="size-[34px] text-[#25d366]" />
        </AppSlot>
        <AppSlot>
          <svg className="h-[30px] w-[29px]" viewBox="0 0 29 30">
            <path d="M8 6V2.500A1.500 1.500 0 0 1 9.500 1h10A1.500 1.500 0 0 1 21 2.500V6" fill="none" stroke="#2fa8e8" strokeWidth="2" />
            <path d="M0 5h29v20a5 5 0 0 1-5 5H5a5 5 0 0 1-5-5z" fill="#ececec" />
            <path d="M9 12h5v5H9z" fill="#f25022" />
            <path d="M15 12h5v5h-5z" fill="#7fba00" />
            <path d="M9 18h5v5H9z" fill="#00a4ef" />
            <path d="M15 18h5v5h-5z" fill="#ffb900" />
          </svg>
        </AppSlot>
        <AppSlot mark>
          <svg className="h-[27px] w-[30px]" viewBox="0 0 30 27">
            <path d="M0 2a2 2 0 0 1 2-2h8.500L14 3.500 10 9H0z" fill="#d99a0a" />
            <path d="M0 6h10.500L14 3.500h14.500A1.500 1.500 0 0 1 30 5v20.500a1.500 1.500 0 0 1-1.500 1.500h-27A1.500 1.500 0 0 1 0 25.500z" fill="#fdc934" />
            <path d="M5 27v-5.500A2.500 2.500 0 0 1 7.500 19h15a2.500 2.500 0 0 1 2.500 2.500V27z" fill="#1274c4" />
            <path d="M8.500 22.700h13" stroke="#0b4f8f" strokeWidth="1.200" />
          </svg>
        </AppSlot>
        <AppSlot>
          <svg className="size-[30px]" viewBox="0 0 30 30">
            <defs>
              <linearGradient id="ma" x1="0" y1="1" x2="1" y2="0">
                <stop offset="0" stopColor="#5a20f5" />
                <stop offset=".5" stopColor="#2f62f7" />
                <stop offset="1" stopColor="#1695fb" />
              </linearGradient>
            </defs>
            <rect width="30" height="30" fill="url(#ma)" />
            <path d="M4 22 11 8h3L7 22zM12 22l7-14h5v14h-3.500v-3.500H17L15.300 22zM20.500 15.500V12l-1.800 3.500z" fill="#e4e6fb" fillRule="evenodd" />
          </svg>
        </AppSlot>
        <AppSlot mark>
          <svg className="size-[30px]" viewBox="0 0 30 30">
            <path d="M15 0a15 15 0 0 0-1.800 29.900v-2.200c0-.8-.4-1.500-1.200-1.800a11.300 11.300 0 1 1 14.300-10.300C25.900 21.500 16 29.200 13.600 29.900A15 15 0 1 0 15 0z" fill="#00c8fa" />
          </svg>
        </AppSlot>
        <AppSlot>
          <svg className="h-[30px] w-[27px]" viewBox="0 0 27 30">
            <path d="M0 0 13.500 6.500 27 0v23.500L13.500 30 0 23.500zM5 7.500v12.500l8.500 4.200L22 20V7.500l-8.500 4.200z" fill="#c6302b" fillRule="evenodd" />
          </svg>
        </AppSlot>
        <AppSlot active>
          <EdgeLogo />
        </AppSlot>
        <AppSlot mark>
          <div className="flex size-[29px] items-center justify-center rounded-full bg-black">
            <FaSpotify className="size-[30px] shrink-0 text-[#1ed760]" />
          </div>
        </AppSlot>
      </div>
      <Glyph className="ml-auto h-[9px] w-[15px]" viewBox="0 0 15 9">
        <path d="m1.200 7.500 6.300-6 6.300 6" strokeWidth="1.800" />
      </Glyph>
      <svg className="ml-[23px] h-[20px] w-[21px] shrink-0" viewBox="0 0 21 20">
        <path d="M4 16a4 4 0 0 1-.5-8C5 4.500 8 3 11 3.500c3 .4 4.500 2.500 5 4.500v8z" fill="#b9b4c4" />
        <path d="M6 6c2-2.500 8-3 10 2l-4 1z" fill="#85808f" />
        <circle cx="15" cy="14" r="5.800" fill="#fff" />
        <path d="M11.500 13.500a3.600 3.600 0 0 1 6.500-1.500M18.500 14.500a3.600 3.600 0 0 1-6.500 1.500" stroke="#1b7fd6" strokeWidth="1.500" fill="none" />
        <circle cx="15" cy="14" r="5.500" stroke="#1b7fd6" strokeWidth=".8" fill="none" />
      </svg>
      <div className="-mt-[3px] ml-[22px] w-[30px] text-center leading-[20px] tracking-[-0.4px]">
        ENG
        <br />
        IN
      </div>
      <Glyph className="ml-[22px] h-[17px] w-[20px]" viewBox="0 0 20 17">
        <path d="M1 6.500a12.700 12.700 0 0 1 18 0" strokeWidth="1.400" opacity=".4" />
        <path d="M3.500 9.300a9.200 9.200 0 0 1 13 0M6 12a5.700 5.700 0 0 1 8 0" strokeWidth="1.600" />
        <circle cx="10" cy="14.800" r="1.600" fill="#fff" stroke="none" />
      </Glyph>
      <Glyph className="ml-[10px] h-[16px] w-[20px]" viewBox="0 0 20 16">
        <path d="M1 5.300h3L9 1.300v13.400l-5-4H1zM12.800 5l6 6M18.800 5l-6 6" strokeWidth="1.300" />
      </Glyph>
      <svg className="ml-[10px] h-[14px] w-[20px] shrink-0" viewBox="0 0 20 14">
        <rect x=".8" y="1" width="16" height="12" rx="2.500" fill="none" stroke="#fff" strokeWidth="1.400" />
        <rect x="3" y="3.300" width="3.500" height="7.400" rx=".8" fill="#fff" />
        <path d="M17.500 4.800h1a1.500 1.500 0 0 1 1.500 1.500v1.400a1.500 1.500 0 0 1-1.500 1.500h-1z" fill="#fff" />
      </svg>
      <div className="-mt-[3px] ml-[18px] w-[80px] text-right leading-[20px]">
        <div className="tracking-[-0.5px]">18:10</div>
        <div>01-09-2024</div>
      </div>
      <svg className="mr-[27px] ml-[11px] h-[19px] w-[16px] shrink-0" viewBox="0 0 16 19">
        <path d="M8 0a6 6 0 0 1 6 6v5l2 3.500c.2.600 0 1-.7 1H.7c-.7 0-.9-.4-.7-1L2 11V6a6 6 0 0 1 6-6zM5 16.500h6a3 3 0 0 1-6 0z" fill="#efb8f0" />
      </svg>
    </div>
  );
}

export default function App() {
  return (
    <div className="flex h-[1200px] w-[1920px] flex-col overflow-hidden bg-[#3b3b3b] font-['Open_Sans','Noto_Sans',sans-serif]">
      <TabStrip />
      <Toolbar />
      <div className="flex h-[1051px] shrink-0 pb-[5px] pl-[5px]">
        <div className="mt-[1px] flex w-[1860px] shrink-0 overflow-hidden rounded-[10px] bg-[#2b2b2b]">
          <div className="w-[1841px] shrink-0 overflow-hidden bg-white">
            <SiteHeader />
            <main className="flex h-[548px] flex-col items-center pt-[219px] text-[20px] leading-[30px] font-bold text-[#444444]">
              <p>Your record submitted successfully</p>
              <p>Ref ID: 7225976</p>
              <p>Name: Nishi Shukla</p>
              <p>Email: nishishukla772@gmail.com</p>
            </main>
            <SiteFooter />
          </div>
          <ScrollBar />
        </div>
        <SideBar />
      </div>
      <TaskBar />
    </div>
  );
}
